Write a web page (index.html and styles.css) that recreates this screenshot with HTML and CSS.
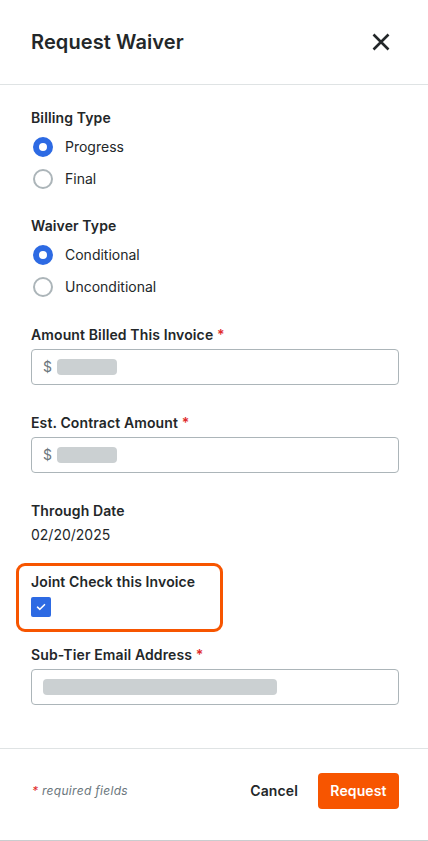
FILE: index.html
```html
<!DOCTYPE html>
<html lang="en">
<head>
<meta charset="utf-8">
<title>Request Waiver</title>
<link rel="stylesheet" href="styles.css">
</head>
<body>
<div class="modal">
  <header class="modal-header">
    <h1 class="modal-title">Request Waiver</h1>
    <button class="close-btn" aria-label="Close">
      <svg width="18" height="18" viewBox="0 0 18 18"><path d="M1.5 1.5 L16.5 16.5 M16.5 1.5 L1.5 16.5" stroke="#232729" stroke-width="2.6" fill="none"/></svg>
    </button>
  </header>
  <main class="modal-body">
    <section class="field group">
      <div class="label">Billing Type</div>
      <div class="radio-list">
        <label class="radio-row"><span class="radio checked"></span><span>Progress</span></label>
        <label class="radio-row"><span class="radio"></span><span>Final</span></label>
      </div>
    </section>
    <section class="field group">
      <div class="label">Waiver Type</div>
      <div class="radio-list">
        <label class="radio-row"><span class="radio checked"></span><span>Conditional</span></label>
        <label class="radio-row"><span class="radio"></span><span>Unconditional</span></label>
      </div>
    </section>
    <section class="field input-field">
      <div class="label">Amount Billed This Invoice <span class="req">*</span></div>
      <div class="input"><span class="prefix">$</span><span class="blur short"></span></div>
    </section>
    <section class="field input-field wide-gap">
      <div class="label">Est. Contract Amount <span class="req">*</span></div>
      <div class="input"><span class="prefix">$</span><span class="blur short"></span></div>
    </section>
    <section class="field date-field">
      <div class="label">Through Date</div>
      <div class="value">02/20/2025</div>
    </section>
    <section class="highlight">
      <div class="label">Joint Check this Invoice</div>
      <span class="checkbox">
        <svg width="10" height="8" viewBox="0 0 10 8"><path d="M1.5 4.2 L3.9 6.3 L8.5 1.7" stroke="#fff" stroke-width="1.6" fill="none" stroke-linecap="round" stroke-linejoin="round"/></svg>
      </span>
    </section>
    <section class="field email-field">
      <div class="label">Sub-Tier Email Address <span class="req">*</span></div>
      <div class="input"><span class="blur long"></span></div>
    </section>
  </main>
  <footer class="modal-footer">
    <div class="req-note"><span class="req">*</span> required fields</div>
    <div class="actions">
      <button class="btn-cancel">Cancel</button>
      <button class="btn-primary">Request</button>
    </div>
  </footer>
</div>
</body>
</html>
```
FILE: styles.css
```css
* { box-sizing: border-box; }
html, body { margin: 0; padding: 0; background: #fff; }
body {
  font-family: Inter, "Noto Sans", "Liberation Sans", sans-serif;
  color: #232729;
  font-size: 14px;
  line-height: 20px;
}
.modal {
  width: 428px;
  height: 841px;
  display: flex;
  flex-direction: column;
  border-bottom: 1px solid #c9cdcf;
}
.modal-header {
  height: 85px;
  flex: none;
  display: flex;
  align-items: center;
  justify-content: space-between;
  padding: 0 38px 0 31px;
  border-bottom: 1px solid #dfe3e4;
}
.modal-title {
  margin: 0;
  font-size: 20px;
  font-weight: 600;
  line-height: 24px;
  letter-spacing: 0.1px;
}
.close-btn {
  border: 0;
  background: none;
  padding: 0;
  width: 18px;
  height: 18px;
  display: flex;
  cursor: pointer;
}
.modal-body {
  flex: 1;
  padding: 23px 29px 0 31px;
  display: flex;
  flex-direction: column;
}
.label {
  font-weight: 600;
  font-size: 14px;
  line-height: 20px;
  letter-spacing: 0.12px;
}
.req { color: #e02b2b; }
.group + .group { margin-top: 21px; }
.radio-list {
  margin-top: 3px;
  display: flex;
  flex-direction: column;
}
.radio-row {
  height: 32px;
  display: flex;
  align-items: center;
  gap: 12px;
  padding-left: 2px;
}
.radio {
  width: 20px;
  height: 20px;
  border-radius: 50%;
  border: 2px solid #acb5b9;
  background: #fff;
  flex: none;
}
.radio.checked {
  border: 6px solid #2d6ae3;
}
.input-field { margin-top: 22px; }
.input-field.wide-gap { margin-top: 28px; }
.input {
  margin-top: 4px;
  height: 36px;
  border: 1px solid #acb5b9;
  border-radius: 4px;
  display: flex;
  align-items: center;
  padding: 0 11px;
  gap: 5px;
}
.prefix { color: #6a767c; font-size: 14px; }
.blur {
  height: 16px;
  border-radius: 4px;
  background: #cbd0d2;
}
.blur.short { width: 60px; }
.blur.long { width: 234px; }
.date-field { margin-top: 28px; }
.value { margin-top: 4px; }
.highlight {
  margin: 18px 0 0 -15px;
  width: 207px;
  border: 3px solid #f75500;
  border-radius: 9px;
  padding: 6px 12px 12px 12px;
  display: flex;
  flex-direction: column;
  gap: 5px;
}
.checkbox {
  width: 20px;
  height: 20px;
  border-radius: 2px;
  background: #2d6ae3;
  display: flex;
  align-items: center;
  justify-content: center;
}
.email-field { margin-top: 13px; }
.modal-footer {
  flex: none;
  height: 92px;
  border-top: 1px solid #dfe3e4;
  display: flex;
  align-items: center;
  justify-content: space-between;
  padding: 0 29px 8px 32px;
}
.req-note {
  font-size: 12px;
  font-style: italic;
  color: #6a767c;
  letter-spacing: 0.3px;
}
.actions {
  display: flex;
  align-items: center;
  gap: 20px;
}
.btn-cancel {
  border: 0;
  background: none;
  font: inherit;
  font-weight: 600;
  letter-spacing: 0.12px;
  color: #232729;
  padding: 0;
  cursor: pointer;
}
.btn-primary {
  border: 0;
  background: #f75500;
  color: #fff;
  font: inherit;
  font-weight: 600;
  letter-spacing: 0.12px;
  height: 36px;
  width: 81px;
  border-radius: 4px;
  cursor: pointer;
}
```
